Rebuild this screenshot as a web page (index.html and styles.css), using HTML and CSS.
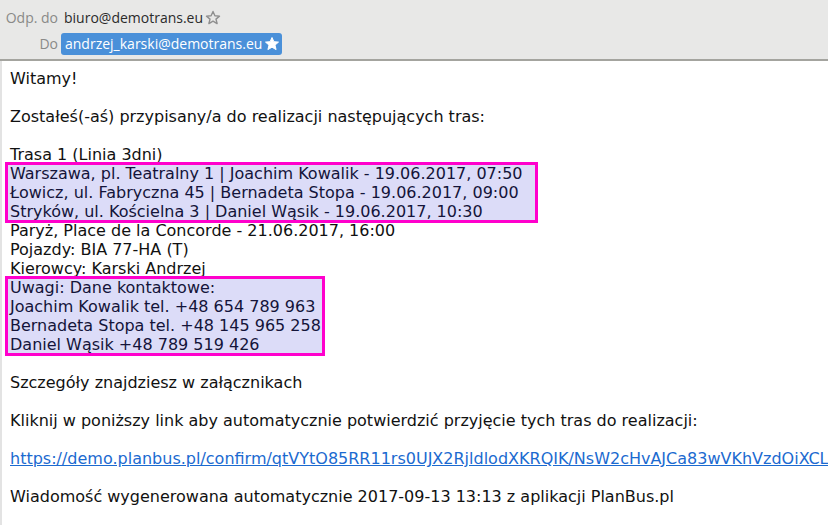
FILE: index.html
```html
<!DOCTYPE html>
<html lang="pl">
<head>
    <meta charset="UTF-8">
    <meta name="viewport" content="width=device-width, initial-scale=1.0">
    <title>Wiadomość</title>
    <link rel="stylesheet" href="styles.css">
</head>
<body>
    <div class="header">
        <div class="row">
            <span class="label">Odp. do</span>
            <span class="addr">biuro@demotrans.eu
                <svg class="star" viewBox="0 0 16 16"><path d="M8 1.5l1.9 4.2 4.6.4-3.5 3 1.1 4.5L8 11.2l-4.1 2.4 1.1-4.5-3.5-3 4.6-.4z" fill="none" stroke="#8f8f8f" stroke-width="1.4" stroke-linejoin="round"/></svg>
            </span>
        </div>
        <div class="row">
            <span class="label">Do</span>
            <span class="addr pill">andrzej_karski@demotrans.eu
                <svg class="star" viewBox="0 0 16 16"><path d="M8 1.5l1.9 4.2 4.6.4-3.5 3 1.1 4.5L8 11.2l-4.1 2.4 1.1-4.5-3.5-3 4.6-.4z" fill="#fff" stroke="#fff" stroke-width="1" stroke-linejoin="round"/></svg>
            </span>
        </div>
    </div>

    <div class="message">
        <p>Witamy!</p>
        <p>Zostałeś(-aś) przypisany/a do realizacji następujących tras:</p>
        <p>Trasa 1 (Linia 3dni)<br>
            <span class="hl hl-route">Warszawa, pl. Teatralny 1 | Joachim Kowalik - 19.06.2017, 07:50<br>
            Łowicz, ul. Fabryczna 45 | Bernadeta Stopa - 19.06.2017, 09:00<br>
            Stryków, ul. Kościelna 3 | Daniel Wąsik - 19.06.2017, 10:30</span>
            Paryż, Place de la Concorde - 21.06.2017, 16:00<br>
            Pojazdy: BIA 77-HA (T)<br>
            Kierowcy: Karski Andrzej<br>
            <span class="hl hl-notes">Uwagi: Dane kontaktowe:<br>
            Joachim Kowalik tel. +48 654 789 963<br>
            Bernadeta Stopa tel. +48 145 965 258<br>
            Daniel Wąsik +48 789 519 426</span>
        </p>
        <p>Szczegóły znajdziesz w załącznikach</p>
        <p>Kliknij w poniższy link aby automatycznie potwierdzić przyjęcie tych tras do realizacji:</p>
        <p><a href="#">https://demo.planbus.pl/confirm/qtVYtO85RR11rs0UJX2RjldlodXKRQIK/NsW2cHvAJCa83wVKhVzdOiXCLbQ2mT7pFe</a></p>
        <p>Wiadomość wygenerowana automatycznie 2017-09-13 13:13 z aplikacji PlanBus.pl</p>
    </div>
</body>
</html>
```

FILE: styles.css
```css
*{
    margin: 0;
    padding: 0;
    box-sizing: border-box;
}
body{
    display: flex;
    flex-direction: column;
    width: 828px;
    height: 525px;
    overflow: hidden;
    background: #fff;
    font-family: "DejaVu Sans", sans-serif;
}

/* header with addresses */
.header{
    flex: none;
    height: 61px;
    background: #e8e8e7;
    border-bottom: 2px solid #a4a49f;
    padding-top: 6px;
    font-family: "Open Sans", sans-serif;
    font-size: 14px;
}
.header .row{
    display: grid;
    grid-template-columns: 58px auto;
    column-gap: 4px;
    align-items: center;
    height: 23px;
    margin-bottom: 3px;
}
.header .label{
    text-align: right;
    color: #8a8a88;
}
.header .addr{
    display: inline-flex;
    align-items: center;
    width: fit-content;
    color: #2b2b2b;
    padding: 0 2px;
    height: 22px;
}
.header .pill{
    margin-left: -1px;
    background: #4a90d9;
    color: #fff;
    border-radius: 3px;
    padding: 0 2px 0 4px;
}
.star{
    width: 16px;
    height: 16px;
    margin-left: 2px;
}

/* message body */
.message{
    flex: 1;
    overflow: hidden;
    border-left: 2px solid #e3e3e3;
    padding: 8px 8px 0 8px;
    font-size: 16px;
    line-height: 19px;
    color: #111;
    white-space: nowrap;
}
.message p{
    margin-bottom: 19px;
}
.hl{
    display: block;
    margin-left: -3px;
    padding-left: 3px;
    background: #dcdcf8;
    color: #14143a;
    outline: 3px solid #ff00cc;
    outline-offset: -1px;
}
.hl-route{
    width: 529px;
}
.hl-notes{
    width: 316px;
}
a{
    color: #1b6ad0;
    text-decoration: underline;
}
```
